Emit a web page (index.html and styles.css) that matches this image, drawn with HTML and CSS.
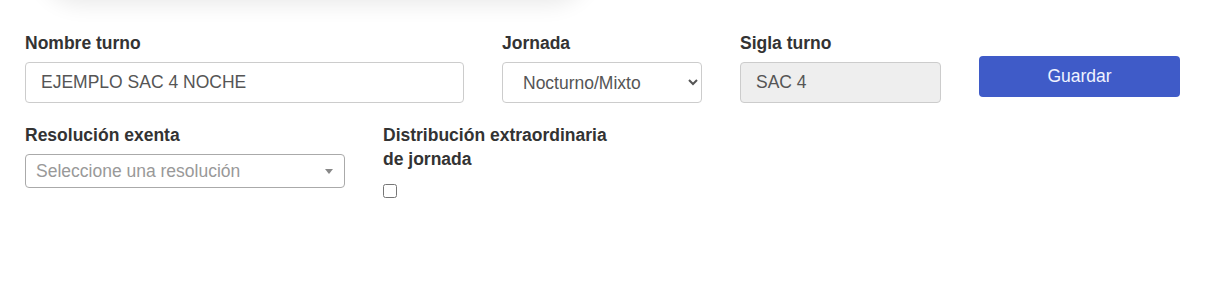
FILE: index.html
```html
<!DOCTYPE html>
<html lang="es">
<head>
  <meta charset="UTF-8">
  <meta name="viewport" content="width=device-width, initial-scale=1.0">
  <title>Turno</title>

  <link rel="stylesheet" href="styles.css">
</head>
<body>
  <div class="top-card"></div>

  <form class="turno-form">
    <div class="form-row">
      <div class="field field-nombre">
        <label class="field-label" for="nombre">Nombre turno</label>
        <input class="form-control" id="nombre" type="text" value="EJEMPLO SAC 4 NOCHE">
      </div>
      <div class="field field-jornada">
        <label class="field-label" for="jornada">Jornada</label>
        <select class="form-select" id="jornada">
          <option>Nocturno/Mixto</option>
        </select>
      </div>
      <div class="field field-sigla">
        <label class="field-label" for="sigla">Sigla turno</label>
        <input class="form-control" id="sigla" type="text" value="SAC 4" disabled>
      </div>
      <div class="field field-boton">
        <button type="button" class="btn-guardar">Guardar</button>
      </div>
    </div>

    <div class="form-row">
      <div class="field field-resolucion">
        <label class="field-label">Resolución exenta</label>
        <div class="select2">
          <span class="select2-placeholder">Seleccione una resolución</span>
          <span class="select2-arrow"></span>
        </div>
      </div>
      <div class="field field-distribucion">
        <label class="field-label" for="distribucion">Distribución extraordinaria de jornada</label>
        <input class="check" id="distribucion" type="checkbox">
      </div>
    </div>
  </form>
</body>
</html>
```

FILE: styles.css
```css
* {
  margin: 0;
  padding: 0;
  box-sizing: border-box;
}

body {
  background-color: #ffffff;
  font-family: 'Liberation Sans', Arial, sans-serif;
  font-size: 17.5px;
  color: #333;
  overflow: hidden;
}

/* card above, cut off by the window */
.top-card {
  margin: -60px 0 0 40px;
  width: 550px;
  height: 60px;
  background-color: #ffffff;
  border-radius: 0 0 40px 40px;
  box-shadow: 0 4px 22px rgba(0, 0, 0, 0.09);
}

.turno-form {
  padding: 31px 0 0 25px;
}

.form-row {
  display: flex;
  gap: 38px;
  margin-bottom: 20px;
}

.field {
  display: flex;
  flex-direction: column;
}

.field-nombre { width: 439px; }
.field-jornada { width: 200px; }
.field-sigla { width: 201px; }
.field-boton { width: 201px; padding-top: 25px; }
.field-resolucion { width: 320px; }
.field-distribucion { width: 240px; }

.field-label {
  font-weight: bold;
  line-height: 24px;
  margin-bottom: 7px;
  color: #333;
}

.form-control,
.form-select {
  height: 41px;
  border: 1px solid #ccc;
  border-radius: 4px;
  font-family: inherit;
  font-size: 17.5px;
  color: #555;
  background-color: #fff;
}

.form-control {
  padding: 0 15px;
}

.form-control:disabled {
  background-color: #eee;
  color: #555;
}

.form-select {
  padding: 0 12px 0 16px;
}

/* Save button */
.btn-guardar {
  height: 41px;
  border: none;
  border-radius: 4px;
  background-color: #3f5bc8;
  color: #f0f3ff;
  font-family: inherit;
  font-size: 17.5px;
  cursor: pointer;
}

/* select2 look-alike */
.select2 {
  height: 34px;
  border: 1px solid #aaa;
  border-radius: 4px;
  display: flex;
  align-items: center;
  justify-content: space-between;
  padding: 0 10px 0 10px;
}

.select2-placeholder {
  color: #999;
}

.select2-arrow {
  width: 0;
  height: 0;
  border-left: 4px solid transparent;
  border-right: 4px solid transparent;
  border-top: 5px solid #888;
  margin-right: 1px;
}

.check {
  width: 14px;
  height: 14px;
  margin-top: 6px;
}
```
